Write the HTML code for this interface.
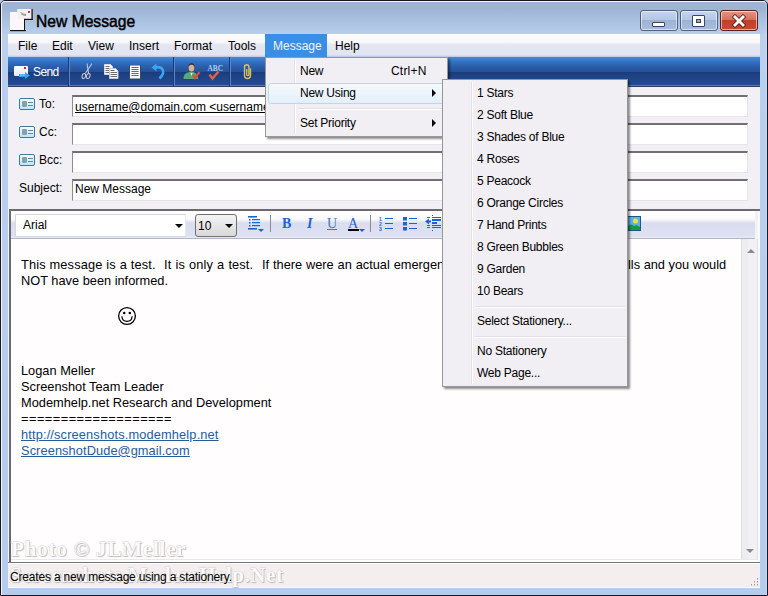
<!DOCTYPE html>
<html><head><meta charset="utf-8">
<style>
*{box-sizing:border-box;margin:0;padding:0}
html,body{width:768px;height:596px;overflow:hidden;background:#b4cced;font-family:"Liberation Sans",sans-serif}
.abs{position:absolute}
#frame{position:absolute;left:0;top:0;width:768px;height:596px;border:1px solid #1c1420;border-radius:5px 5px 0 0;background:linear-gradient(#9cb3d3 0,#9db4d4 8px,#a6bddc 16px,#b5cbe9 30px,#bcd0ec 34px,#b8cfee 80px,#b4cced 100%)}
#frame2{position:absolute;left:0;top:0;width:766px;height:594px;border:1px solid rgba(255,255,255,.85);border-bottom:none;border-right-color:rgba(255,255,255,.25);border-radius:4px 4px 0 0}
#title{position:absolute;left:36px;top:12px;font-size:17px;color:#000;transform:scaleX(0.92);transform-origin:0 0;-webkit-text-stroke:0.5px #000}
.cap{position:absolute;top:10px;height:21px;width:38px;border:1px solid #4f6180;border-radius:3px;box-shadow:inset 0 0 0 1px rgba(255,255,255,.55);background:linear-gradient(#c6d6ec 0,#b4c7e2 45%,#9db3d4 50%,#a9bede 100%)}
#menubar{position:absolute;left:8px;top:34px;width:752px;height:23px;background:linear-gradient(#fdfdfe 0,#f8f8fb 8px,#e4e6f0 11px,#e2e4f2 21px,#c8d4ea 22px,#b0c4e0 23px)}
.mi{position:absolute;top:5px;font-size:12px;color:#000}
#toolbar{position:absolute;left:8px;top:57px;width:752px;height:30px;background:linear-gradient(#4a88d8 0,#4382d2 1px,#3470c0 5px,#2c60ac 9px,#24509a 15px,#1a3a78 15px,#1c3e7e 16px,#234c96 28px,#5878b8 28px,#5878b8 29px,#383c58 29px)}
.tsep{position:absolute;top:0;width:2px;height:29px;background:linear-gradient(90deg,#1a3a70 0,#1a3a70 1px,#5a86c8 1px)}
#hdr{position:absolute;left:8px;top:87px;width:752px;height:123px;background:#f3f0f5}
.fld{position:absolute;left:72px;width:676px;height:22px;background:#fff;border-top:2px solid #707072;border-left:1px solid #8c8c90;border-right:1px solid #e6e4ea;border-bottom:1px solid #e6e4ea;font-size:12px;padding:3px 2px 0;white-space:nowrap;overflow:hidden}
.lbl{position:absolute;font-size:12px;color:#000;margin-top:1px}
.card{position:absolute;left:11px;width:16px;height:12px;border:1px solid #3b7a9e;border-radius:2px;background:linear-gradient(#f4fbff,#c4e4f4)}
.card i{position:absolute;left:2px;top:2px;width:5px;height:6px;background:#8aa0a8;border-radius:1px}
.card b{position:absolute;left:8px;top:3px;width:5px;height:1px;background:#5a8aa8;box-shadow:0 3px 0 #5a8aa8}
#editor{position:absolute;left:9px;top:209px;width:751px;height:353px;border-top:2px solid #6c6a6e;border-left:2px solid #6c6a6e;background:linear-gradient(90deg,transparent 0,transparent 747px,#fcfaff 747px,#fcfaff 749px,#f4f2f6 749px),linear-gradient(#f4f2f6 0,#f4f2f6 348px,#e8e8ea 348px,#e8e8ea 349px,#fff 349px)}
#fmt{position:absolute;left:11px;top:211px;width:744px;height:28px;background:linear-gradient(#ffffff 0,#fbfbfd 8px,#d9ddef 12px,#dde1f1 25px,#e6e8f3 26px,#e6e8f3 27px,#b4b4c8 27px)}
#body{position:absolute;left:11px;top:239px;width:730px;height:320px;background:#fffdfe;font-size:13.33px;color:#000}
#sb{position:absolute;left:741px;top:239px;width:17px;height:320px;background:linear-gradient(90deg,#e0dce4 0,#e0dce4 1px,#eceeee 1px,#eceeee 7px,#f2f0f4 7px,#f2f0f4 16px,#e4e0e8 16px)}
.bl{position:absolute;left:10px;white-space:nowrap;line-height:16px}
#status{position:absolute;left:8px;top:562px;width:752px;height:26px;border-top:1px solid #747478;background:linear-gradient(#fff 0,#fff 1px,#f4eeee 1px,#f4eeee 23px,#efedf0 23px,#efedf0 24px,#fff 24px)}
.menu{position:absolute;background:#f1eff4;border:1px solid #979797;box-shadow:2px 2px 2px rgba(0,0,0,.45)}
.mt{position:absolute;font-size:12px;color:#000;white-space:nowrap;letter-spacing:-0.25px}
.gut{position:absolute;top:2px;width:2px;border-left:1px solid #e2e0e5;border-right:1px solid #fff}
.msep{position:absolute;height:2px;border-top:1px solid #e2e0e5;border-bottom:1px solid #fff}
.arr{position:absolute;width:0;height:0;border-left:4px solid #000;border-top:4px solid transparent;border-bottom:4px solid transparent}
.fsep{position:absolute;top:215px;width:1px;height:17px;background:#8a8a90}
.wm{position:absolute;font-family:"Liberation Serif",serif;font-weight:bold;color:#fbfbfc;-webkit-text-stroke:1px rgba(212,210,216,.9);paint-order:stroke fill;text-shadow:1px 1px 1px rgba(120,120,120,.4);white-space:nowrap}
</style></head><body>
<div id="frame"><div id="frame2"></div></div>

<!-- title icon -->
<svg class="abs" style="left:9px;top:8px" width="25" height="24" viewBox="0 0 25 24"><rect x="1" y="4" width="15" height="19" fill="#fbf7f9"/><rect x="15" y="11" width="1" height="12" fill="#111"/><rect x="1" y="22" width="16" height="1.2" fill="#111"/><rect x="8.5" y="1" width="14" height="10" fill="#f6eef0"/><rect x="8.5" y="1" width="5" height="3" fill="#e8f4e8"/><rect x="22.5" y="1" width="1.2" height="11" fill="#111"/><rect x="15" y="10.8" width="8.7" height="1.2" fill="#111"/><path d="M11.5 4.5 L14 6 L17 6.5 M12.5 6.5 L17 7.5" stroke="#8a8488" stroke-width="0.9" fill="none"/><rect x="19" y="3" width="2" height="2" fill="#c84058"/></svg>
<div id="title">New Message</div>

<!-- caption buttons -->
<div class="cap" style="left:640px"><div class="abs" style="left:11px;top:11px;width:13px;height:5px;background:#fff;border:1px solid #3a4660;border-radius:1px"></div></div>
<div class="cap" style="left:680px"><div class="abs" style="left:11px;top:4px;width:13px;height:12px;background:#fff;border:1px solid #3a4660;border-radius:1px"><div class="abs" style="left:3px;top:3px;width:5px;height:4px;border:1px solid #3a4660;background:#9aaac0"></div></div></div>
<div class="cap" style="left:720px;border-color:#5a2020;background:linear-gradient(#e49486 0,#d8705c 45%,#c2402a 50%,#c84a34 100%)">
 <svg class="abs" style="left:10px;top:3px" width="16" height="14" viewBox="0 0 16 14"><path d="M4 3 L12 11 M12 3 L4 11" stroke="#4a1810" stroke-width="4.6" stroke-linecap="square" opacity=".8"/><path d="M4 3 L12 11 M12 3 L4 11" stroke="#fff" stroke-width="2.8" stroke-linecap="square"/></svg>
</div>

<div id="menubar">
 <span class="mi" style="left:10px">File</span>
 <span class="mi" style="left:44px">Edit</span>
 <span class="mi" style="left:80px">View</span>
 <span class="mi" style="left:121px">Insert</span>
 <span class="mi" style="left:166px">Format</span>
 <span class="mi" style="left:220px">Tools</span>
 <div class="abs" style="left:257px;top:0;width:62px;height:23px;background:#3b8ee6"></div>
 <span class="mi" style="left:265px;color:#eef4ff">Message</span>
 <span class="mi" style="left:327px">Help</span>
</div>

<div id="toolbar">
 <!-- send icon -->
 <div class="abs" style="left:6px;top:9px;width:14px;height:10px;background:linear-gradient(#fff,#ece6ea);border-radius:1px"></div>
 <div class="abs" style="left:16px;top:10px;width:2px;height:2px;background:#d02040"></div>
 <svg class="abs" style="left:11px;top:15px" width="11" height="7" viewBox="0 0 11 7"><path d="M0 2h6V0l5 3.5L6 7V5H0z" fill="#38a0ee"/><path d="M1 3h5" stroke="#a8e0ff" stroke-width="0.8"/></svg>
 <span class="abs" style="left:25px;top:8px;font-size:12px;color:#fff;letter-spacing:-0.6px">Send</span>
 <div class="tsep" style="left:60px"></div>
 <!-- scissors -->
 <svg class="abs" style="left:73px;top:6px" width="12" height="17" viewBox="0 0 12 17"><g fill="none" stroke="#c4c8d4" stroke-width="1.1"><path d="M6 0.5 L7.5 10"/><path d="M11 0.5 L4.5 10"/><ellipse cx="2.8" cy="13" rx="1.7" ry="2.6" transform="rotate(20 2.8 13)"/><ellipse cx="7.2" cy="13" rx="1.7" ry="2.6" transform="rotate(20 7.2 13)"/></g></svg>
 <!-- copy -->
 <svg class="abs" style="left:96px;top:7px" width="15" height="15" viewBox="0 0 15 15"><path d="M0.5 0.5h6l2 2v8h-8z" fill="#fff" stroke="#d8d8e0" stroke-width="1"/><path d="M1.5 2.5h4M1.5 4.5h5M1.5 6.5h5M1.5 8.5h5" stroke="#6a6a70"/><path d="M5.5 4.5h6l2.5 2.5v7.5h-8.5z" fill="#fff" stroke="#c8c8d0" stroke-width="1"/><path d="M6.5 6.5h4M6.5 8.5h6.5M6.5 10.5h6.5M6.5 12.5h6.5" stroke="#6a6a70"/></svg>
 <!-- paste/doc -->
 <svg class="abs" style="left:121px;top:8px" width="12" height="14" viewBox="0 0 12 14"><rect x="0" y="0" width="12" height="14" fill="#3a4a6a"/><rect x="1" y="0.5" width="10" height="13" fill="#fafafa"/><path d="M2.5 2.5h7M2.5 4.5h7M2.5 6.5h7M2.5 8.5h7M2.5 10.5h7" stroke="#6a6a70" stroke-width="1"/></svg>
 <!-- undo -->
 <svg class="abs" style="left:143px;top:6px" width="16" height="17" viewBox="0 0 16 17"><path d="M4 4.5 C11 3 16 8 8.5 15.5" fill="none" stroke="#3aa4f0" stroke-width="2.6"/><path d="M0.5 4.5 L5.5 0.5 L5.5 8.5 z" fill="#3aa4f0"/></svg>
 <div class="tsep" style="left:165px"></div>
 <!-- contact -->
 <svg class="abs" style="left:175px;top:6px" width="18" height="17" viewBox="0 0 18 17"><ellipse cx="8.5" cy="5" rx="2.8" ry="3.6" fill="#e0b090"/><path d="M5.7 4.5 a2.8 3 0 0 1 5.6 0 l0 -1.5 a2.8 2.8 0 0 0 -5.6 0z" fill="#3a2818"/><path d="M0.5 16 C0.5 11 3 9 8.5 9 C13 9 15 11 15 16z" fill="#58a878"/><path d="M7.5 10 L8.5 13 L9.5 10z" fill="#fff"/><path d="M10 12 L12 15 L16.5 9" stroke="#d85040" stroke-width="2.2" fill="none"/></svg>
 <!-- ABC -->
 <svg class="abs" style="left:199px;top:7px" width="18" height="17" viewBox="0 0 18 17"><text x="0.5" y="6.5" font-family="Liberation Serif" font-weight="bold" font-size="8.2" fill="#a8d0f8" textLength="15.5" lengthAdjust="spacingAndGlyphs">ABC</text><path d="M2.5 10.5 L5.5 14.5 L11.5 7.5" stroke="#e06048" stroke-width="2.4" fill="none"/></svg>
 <div class="tsep" style="left:221px"></div>
 <!-- paperclip -->
 <svg class="abs" style="left:235px;top:7px" width="10" height="16" viewBox="0 0 10 16"><path d="M7.5 4.5 V11.5 a3 3 0 0 1 -6 0 V3 a2.2 2.2 0 0 1 4.4 0 V10.5 a1.1 1.1 0 0 1 -2.2 0 V5" fill="none" stroke="#d8c060" stroke-width="1.4"/></svg>
</div>

<div id="hdr">
 <div class="card" style="top:11px"><i></i><b></b></div>
 <div class="card" style="top:39px"><i></i><b></b></div>
 <div class="card" style="top:67px"><i></i><b></b></div>
 <span class="lbl" style="left:31px;top:9px">To:</span>
 <span class="lbl" style="left:31px;top:37px">Cc:</span>
 <span class="lbl" style="left:31px;top:65px">Bcc:</span>
 <span class="lbl" style="left:11px;top:93px">Subject:</span>
</div>
<div class="fld" style="top:95px"><u>username@domain.com &lt;username@domain.com&gt;</u></div>
<div class="fld" style="top:123px"></div>
<div class="fld" style="top:151px"></div>
<div class="fld" style="top:179px;padding-top:1px">New Message</div>

<div class="abs" style="left:8px;top:209px;width:752px;height:353px;background:#f4f2f6"></div>
<div id="editor"></div>
<div id="fmt">
 <div class="abs" style="left:4px;top:3px;width:171px;height:23px;background:#fff;border:1px solid #d4d6e2;border-right-color:#e8e8f0"></div>
 <span class="abs" style="left:12px;top:7px;font-size:12px">Arial</span>
 <div class="abs" style="left:164px;top:13px;width:0;height:0;border-left:4px solid transparent;border-right:4px solid transparent;border-top:4px solid #000"></div>
 <div class="abs" style="left:184px;top:3px;width:42px;height:23px;border:1px solid #707070;border-radius:3px;background:linear-gradient(#f4f4f4,#e6e6e6 50%,#d8d8d8)"></div>
 <span class="abs" style="left:187px;top:8px;font-size:12px">10</span>
 <div class="abs" style="left:214px;top:13px;width:0;height:0;border-left:4px solid transparent;border-right:4px solid transparent;border-top:4px solid #000"></div>
</div>
<!-- fmt icons -->
<svg class="abs" style="left:248px;top:216px" width="17" height="17" viewBox="0 0 17 17"><g fill="#1a64d0"><rect x="0" y="0" width="9" height="1.6"/><rect x="1" y="3" width="1.5" height="1.5"/><rect x="4" y="3" width="8" height="1.2"/><rect x="1" y="6" width="1.5" height="1.5"/><rect x="4" y="6" width="8" height="1.2"/><rect x="1" y="9" width="1.5" height="1.5"/><rect x="4" y="9" width="8" height="1.2"/><rect x="0" y="12" width="9" height="1.6"/><path d="M10 13h6l-3 3z"/></g></svg>
<div class="fsep" style="left:270px"></div>
<span class="abs" style="left:282px;top:216px;font-family:'Liberation Serif',serif;font-weight:bold;font-size:14px;color:#1a64d0">B</span>
<span class="abs" style="left:307px;top:216px;font-family:'Liberation Serif',serif;font-weight:bold;font-style:italic;font-size:14px;color:#1a64d0">I</span>
<span class="abs" style="left:327px;top:216px;font-family:'Liberation Serif',serif;font-size:14px;color:#3a78c8;text-decoration:underline">U</span>
<span class="abs" style="left:348px;top:216px;font-family:'Liberation Serif',serif;font-size:14px;color:#1a64d0">A</span>
<div class="abs" style="left:348px;top:229px;width:11px;height:2px;background:#000"></div>
<div class="abs" style="left:359px;top:229px;width:0;height:0;border-left:3px solid transparent;border-right:3px solid transparent;border-top:3px solid #1a64d0"></div>
<div class="fsep" style="left:370px"></div>
<svg class="abs" style="left:379px;top:216px" width="16" height="16" viewBox="0 0 16 16"><g fill="#1a64d0" font-family="Liberation Sans" font-weight="bold" font-size="5"><text x="0" y="5">1</text><text x="0" y="10">2</text><text x="0" y="15">3</text></g><g fill="#1a64d0"><rect x="6" y="2" width="8" height="1"/><rect x="6" y="7" width="8" height="1"/><rect x="6" y="12" width="8" height="1"/></g></svg>
<svg class="abs" style="left:402px;top:216px" width="16" height="16" viewBox="0 0 16 16"><g fill="#1a64d0"><rect x="1" y="1" width="4" height="3.5"/><rect x="1" y="6" width="4" height="3.5"/><rect x="1" y="11" width="4" height="3.5"/><rect x="7" y="2" width="8" height="1"/><rect x="7" y="7" width="8" height="1"/><rect x="7" y="12" width="8" height="1"/></g></svg>
<svg class="abs" style="left:425px;top:215px" width="17" height="17" viewBox="0 0 17 17"><g fill="#1a64d0"><rect x="2" y="2" width="3" height="1"/><rect x="7" y="2" width="9" height="1"/><rect x="7" y="4" width="9" height="2"/><rect x="7" y="7" width="5" height="2"/><rect x="7" y="10" width="9" height="1"/><rect x="2" y="10" width="3" height="1"/><rect x="2" y="12" width="3" height="1"/><rect x="7" y="12" width="9" height="1"/><path d="M0 6.5 L4 3.5 V5.5 H6 V7.5 H4 V9.5z"/><rect x="7" y="0" width="1" height="1"/><rect x="7" y="15" width="1" height="1"/></g></svg>
<!-- picture icon -->
<svg class="abs" style="left:627px;top:216px" width="14" height="15" viewBox="0 0 14 15"><rect x="0.5" y="0.5" width="13" height="14" fill="#5ab4ec" stroke="#1a5a8a"/><circle cx="8.5" cy="5" r="2.5" fill="#f0e040"/><path d="M1 14 L1 10 Q4 7 7 10 Q10 8 13 11 V14z" fill="#1a9a3a"/></svg>

<div id="body">
 <div class="bl" style="top:252px"></div>
</div>
<div id="sb">
 <div class="abs" style="left:6px;top:10px;width:0;height:0;border-left:4px solid transparent;border-right:4px solid transparent;border-bottom:4px solid #8a8a8a"></div>
 <div class="abs" style="left:5px;top:310px;width:0;height:0;border-left:4px solid transparent;border-right:4px solid transparent;border-top:4px solid #8a8a8a"></div>
</div>
<div class="abs" style="left:0;top:0;font-size:12.8px">
 <div class="bl" id="l1a" style="left:21px;top:257px;word-spacing:0.2px;letter-spacing:0.13px">This message is a test.</div>
 <div class="bl" id="l1b" style="left:164px;top:257px;word-spacing:0.5px;letter-spacing:0.1px">It is only a test.</div>
 <div class="bl" id="l1c" style="left:262px;top:257px;word-spacing:0.3px">If there were an actual emergency, this message would have been</div>
 <div class="bl" style="left:625px;top:257px;background:#fffdfe;padding-left:3px">lls and you would</div>
 <div class="bl" style="left:21px;top:273px">NOT have been informed.</div>
 <div class="bl" style="left:21px;top:363px">Logan Meller</div>
 <div class="bl" style="left:21px;top:379px">Screenshot Team Leader</div>
 <div class="bl" style="left:21px;top:395px">Modemhelp.net Research and Development</div>
 <div class="bl" style="left:21px;top:411px;letter-spacing:0.47px">===================</div>
 <div class="bl" style="left:21px;top:427px;letter-spacing:0.15px;color:#245c9e;text-decoration:underline">http://screenshots.modemhelp.net</div>
 <div class="bl" style="left:21px;top:443px;letter-spacing:0.09px;color:#245c9e;text-decoration:underline">ScreenshotDude@gmail.com</div>
</div>
<svg class="abs" style="left:117px;top:306px" width="20" height="20" viewBox="0 0 20 20"><circle cx="10" cy="10" r="8.4" fill="none" stroke="#000" stroke-width="1.3"/><circle cx="7.2" cy="7" r="1.25"/><circle cx="12.8" cy="7" r="1.25"/><path d="M4.9 10.2 C5.2 17 14.8 17 15.1 10.2" fill="none" stroke="#000" stroke-width="1.2"/></svg>

<div id="status">
 <svg class="abs" style="left:742px;top:14px" width="10" height="10" viewBox="0 0 10 10"><g fill="#9a9aa2"><rect x="7" y="1" width="1" height="1.5"/><rect x="4" y="4" width="1" height="1.5"/><rect x="7" y="4" width="1" height="1.5"/><rect x="1" y="7" width="1" height="1.5"/><rect x="4" y="7" width="1" height="1.5"/><rect x="7" y="7" width="1" height="1.5"/></g></svg>
</div>

<!-- watermark -->
<div class="wm" id="wm1" style="left:11px;top:537px;font-size:21px;letter-spacing:0.8px">Photo © JLMeller</div>
<div class="wm" id="wm2" style="left:10px;top:563px;font-size:21px;letter-spacing:0.55px;">Screenshots.ModemHelp.Net</div>

<!-- main menu -->
<div class="menu" style="left:265px;top:57px;width:183px;height:80px">
 <div class="gut" style="left:28px;height:74px"></div>
 <div class="abs" style="left:2px;top:25px;width:178px;height:21px;border:1px solid #b8daf0;border-radius:3px;background:linear-gradient(#f4f9fe,#e4effc)"></div>
 <span class="mt" style="left:34px;top:6px">New</span>
 <span class="mt" style="left:125px;top:6px;letter-spacing:0.2px">Ctrl+N</span>
 <span class="mt" style="left:34px;top:28px">New Using</span>
 <div class="arr" style="left:166px;top:31px"></div>
 <div class="msep" style="left:32px;top:50px;width:148px"></div>
 <span class="mt" style="left:34px;top:58px">Set Priority</span>
 <div class="arr" style="left:166px;top:61px"></div>
</div>

<!-- submenu -->
<div class="menu" style="left:442px;top:79px;width:186px;height:308px">
 <div class="gut" style="left:28px;height:302px"></div>
 <span class="mt" style="left:34px;top:6px">1 Stars</span>
 <span class="mt" style="left:34px;top:28px">2 Soft Blue</span>
 <span class="mt" style="left:34px;top:50px">3 Shades of Blue</span>
 <span class="mt" style="left:34px;top:72px">4 Roses</span>
 <span class="mt" style="left:34px;top:94px">5 Peacock</span>
 <span class="mt" style="left:34px;top:116px">6 Orange Circles</span>
 <span class="mt" style="left:34px;top:138px">7 Hand Prints</span>
 <span class="mt" style="left:34px;top:160px">8 Green Bubbles</span>
 <span class="mt" style="left:34px;top:182px">9 Garden</span>
 <span class="mt" style="left:34px;top:204px">10 Bears</span>
 <div class="msep" style="left:32px;top:226px;width:150px"></div>
 <span class="mt" style="left:34px;top:234px">Select Stationery...</span>
 <div class="msep" style="left:32px;top:256px;width:150px"></div>
 <span class="mt" style="left:34px;top:264px">No Stationery</span>
 <span class="mt" style="left:34px;top:286px">Web Page...</span>
</div>
<div class="abs" style="left:10px;top:570px;font-size:12px;letter-spacing:-0.18px;white-space:nowrap">Creates a new message using a stationery.</div>
</body></html>
